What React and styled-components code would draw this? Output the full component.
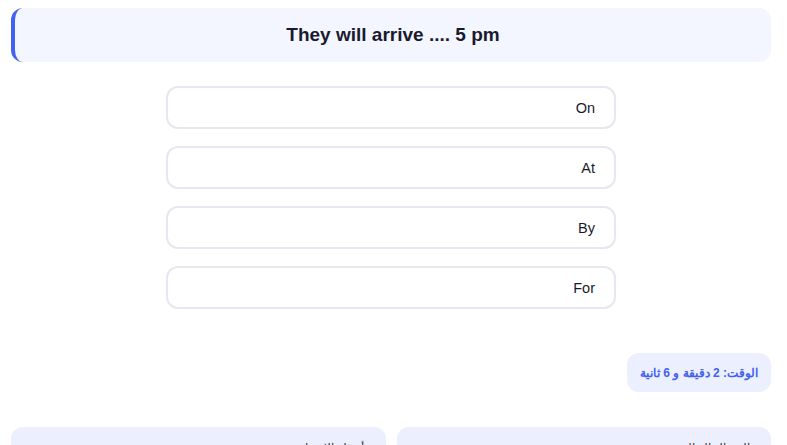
import React from 'react';
import styled, { createGlobalStyle } from 'styled-components';

const GlobalStyle = createGlobalStyle`
  body {
    margin: 0;
    background: #ffffff;
    font-family: "Liberation Sans", Arial, sans-serif;
  }
`;

const Page = styled.div`
  direction: rtl;
  padding: 8px 16px 0 11px;
  display: flex;
  flex-direction: column;
`;

const QuestionCard = styled.div`
  direction: ltr;
  height: 54px;
  box-sizing: border-box;
  background: #f3f6fe;
  border-left: 4px solid #4361ee;
  border-radius: 12px;
  display: flex;
  align-items: center;
  justify-content: center;
  font-size: 19px;
  font-weight: bold;
  color: #1a1a2e;
`;

const Options = styled.div`
  width: 450px;
  margin: 24px auto 0;
  display: flex;
  flex-direction: column;
  gap: 17px;
`;

const Option = styled.button`
  height: 43px;
  box-sizing: border-box;
  border: 2px solid #e5e8ee;
  border-radius: 12px;
  background: #ffffff;
  font-family: inherit;
  font-size: 14.5px;
  color: #1a1a2e;
  text-align: right;
  padding: 0 19px;
  cursor: pointer;
`;

const TimerRow = styled.div`
  display: flex;
  justify-content: flex-start;
  margin-top: 44px;
`;

const Timer = styled.div`
  height: 39px;
  box-sizing: border-box;
  padding: 0 13px;
  display: flex;
  align-items: center;
  background: #eceffd;
  border-radius: 12px;
  color: #4361ee;
  font-size: 12px;
  font-weight: bold;
`;

const Stats = styled.div`
  display: grid;
  grid-template-columns: 1fr 1fr;
  gap: 11px;
  margin-top: 35px;
`;

const StatCard = styled.div`
  background: #eceffd;
  border-radius: 12px;
  padding: 14px 21px;
  height: 70px;
  box-sizing: border-box;
  font-size: 12px;
  color: #3a3a4a;
`;

const options = ['On', 'At', 'By', 'For'];

export default function App() {
  return (
    <>
      <GlobalStyle />
      <Page>
        <QuestionCard>They will arrive .... 5 pm</QuestionCard>
        <Options>
          {options.map((o) => (
            <Option key={o}>{o}</Option>
          ))}
        </Options>
        <TimerRow>
          <Timer>الوقت: 2 دقيقة و 6 ثانية</Timer>
        </TimerRow>
        <Stats>
          <StatCard>السؤال الحالي</StatCard>
          <StatCard>أسئلة الاختبار</StatCard>
        </Stats>
      </Page>
    </>
  );
}
